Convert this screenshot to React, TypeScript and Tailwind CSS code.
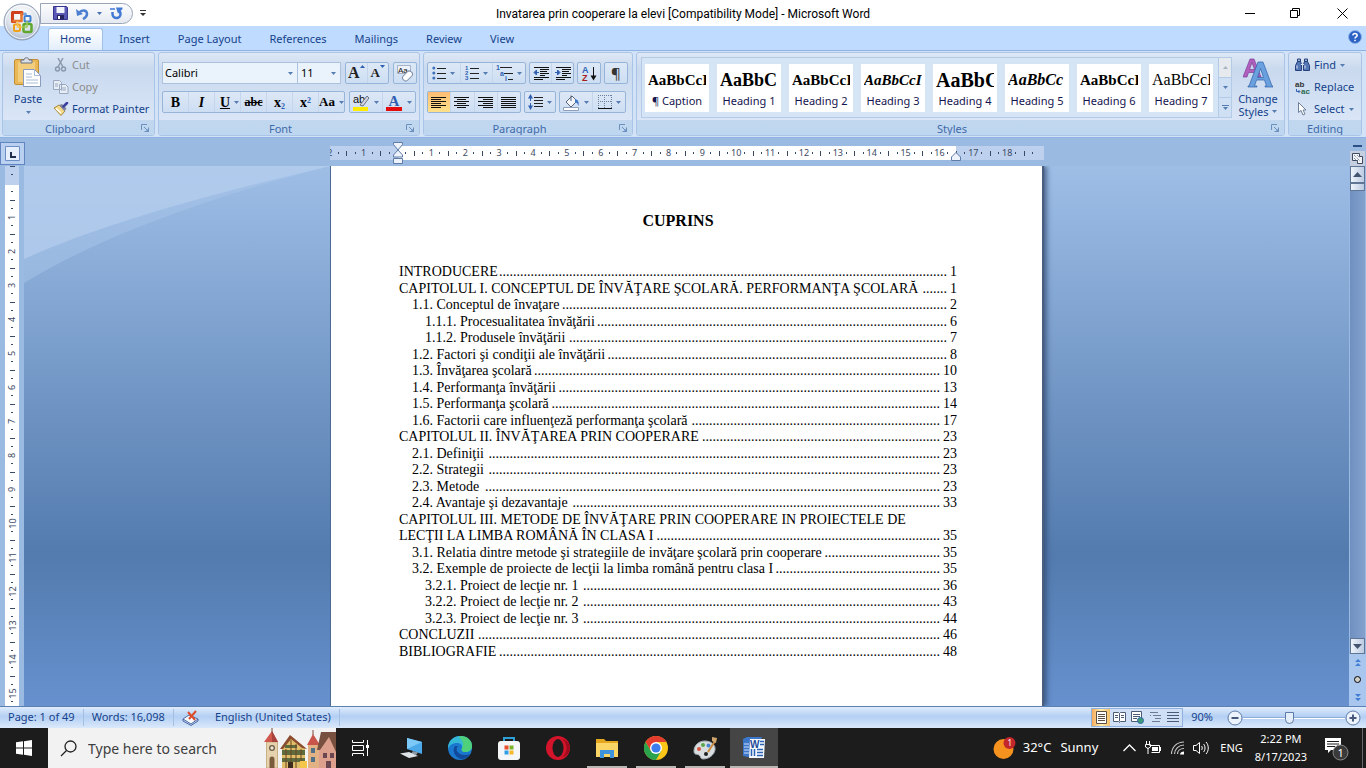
import type { ReactNode } from "react";
import clsx from "clsx";

/* ---------- small shared pieces ---------- */

function Caret({ className = "text-[#567db1]" }: { className?: string }) {
  return (
    <svg width="5" height="3" viewBox="0 0 5 3" className={clsx("shrink-0", className)} aria-hidden="true">
      <path d="M0 0h5L2.500 3z" fill="currentColor" />
    </svg>
  );
}

function Launcher() {
  return (
    <svg width="9" height="9" viewBox="0 0 9 9" aria-hidden="true">
      <path d="M.5 6V.5H6M3 3l3.500 3.500M7.500 3.500v4h-4" fill="none" stroke="#6b8fbf" />
      <path d="M8 4v4H4z" fill="#6b8fbf" />
    </svg>
  );
}

function Group({
  label,
  launcher = true,
  className,
  children,
}: {
  label: string;
  launcher?: boolean;
  className?: string;
  children: ReactNode;
}) {
  return (
    <section
      aria-label={label}
      className={clsx(
        "flex flex-col overflow-hidden rounded-[3px] border border-[#a9c4e6] bg-linear-to-b from-[#dee8f5] from-0% via-[#c9d9ee] via-20% to-[#dfeafa] to-100%",
        className,
      )}
    >
      <div className="flex min-h-0 flex-1">{children}</div>
      <div className="flex h-[15px] items-center bg-linear-to-b from-[#c0d7ef] to-[#bfd6f0] px-1 pt-[2px] text-[#3e6aaa]">
        <span className={clsx("flex-1 text-center leading-[13px]", launcher && "pr-2")}>{label}</span>
        {launcher && (
          <button aria-label={`${label} options`}>
            <Launcher />
          </button>
        )}
      </div>
    </section>
  );
}

function Box({ className, children }: { className?: string; children: ReactNode }) {
  return (
    <div
      className={clsx(
        "flex h-[22px] items-stretch divide-x divide-[#c3d6ec] rounded-[2px] border border-[#97b4d9] bg-linear-to-b from-[#dde8f6] to-[#cddef3]",
        className,
      )}
    >
      {children}
    </div>
  );
}

function Tool({
  label,
  caret,
  active,
  children,
}: {
  label: string;
  caret?: boolean;
  active?: boolean;
  children: ReactNode;
}) {
  return (
    <button
      aria-label={label}
      className={clsx(
        "flex flex-1 items-center justify-center gap-1 text-black",
        active && "bg-linear-to-b from-[#fbbd72] to-[#ffe08a]",
      )}
    >
      {children}
      {caret && <Caret />}
    </button>
  );
}

function Lines({ rows, width = 16 }: { rows: [number, number][]; width?: number }) {
  return (
    <svg width={width} height="13" viewBox={`0 0 ${width} 13`} shapeRendering="crispEdges" aria-hidden="true">
      {rows.map(([x, w], i) => (
        <rect key={i} x={x} y={1 + i * 2} width={w} height="1" fill="#111" />
      ))}
    </svg>
  );
}

/* ---------- title bar ---------- */

function OfficeOrb() {
  return (
    <svg width="38" height="38" viewBox="0 0 38 38" aria-hidden="true">
      <defs>
        <radialGradient id="orb" cx="50%" cy="30%" r="75%">
          <stop offset="0" stopColor="#fff" />
          <stop offset=".55" stopColor="#dfe4ec" />
          <stop offset="1" stopColor="#9fb0c9" />
        </radialGradient>
      </defs>
      <circle cx="19" cy="19" r="18" fill="url(#orb)" stroke="#8c9bb3" />
      <circle cx="19" cy="19" r="16.500" fill="none" stroke="#fff" strokeOpacity=".8" />
      <g fill="none">
        <path d="M19 12.500V9.500H9.500v9H13" stroke="#cf3f1c" strokeWidth="3" strokeLinejoin="round" />
        <path d="M18.500 9.500v8.500H9.500" stroke="#e8762c" strokeWidth="2.500" />
        <rect x="21.500" y="13" width="6" height="5.500" rx="1" stroke="#3f7fd0" strokeWidth="2" />
        <path d="M20 11h4M22 9.500v3" stroke="#6ea3e2" strokeWidth="1.500" />
        <rect x="11" y="21.500" width="6" height="6.500" rx="1" stroke="#f0a11c" strokeWidth="2" />
        <path d="M14.500 18v6h5" stroke="#f7c04c" strokeWidth="1.500" />
        <rect x="20.500" y="21" width="8" height="8" rx="1.500" stroke="#5fa62c" strokeWidth="2.500" />
        <path d="M24 18v6h-5" stroke="#9ccb5a" strokeWidth="1.500" />
      </g>
    </svg>
  );
}

function TitleBar() {
  return (
    <header className="flex h-[26px] shrink-0 items-center bg-white">
      <div className="flex flex-1 items-center">
        <div className="ml-[40px] flex h-[21px] w-[93px] items-center rounded-r-full border border-[#9aa5b8] bg-linear-to-b from-[#fbfcfe] to-[#e6eaf1] pl-3">
          <button aria-label="Save" className="mr-2">
            <svg width="15" height="14" viewBox="0 0 15 14" aria-hidden="true">
              <path d="M.5.5h13l1 1v12H.5z" fill="#5a58b5" stroke="#37358d" />
              <path d="M3.500 1h8v6h-8z" fill="#f2f4fb" />
              <path d="M4 9h7v4.500H4z" fill="#26245f" />
              <path d="M5 10h2v3H5z" fill="#fff" />
            </svg>
          </button>
          <button aria-label="Undo" className="mr-2">
            <svg width="13" height="13" viewBox="0 0 13 13" aria-hidden="true">
              <path d="M3 6c3-4 8-3 8 1 0 2-2 4-4 5" fill="none" stroke="#4d7fd0" strokeWidth="2.500" />
              <path d="M0 2l1 7 6-2z" fill="#4d7fd0" />
            </svg>
          </button>
          <button aria-label="Undo history" className="mr-2">
            <Caret className="text-[#4c6fb0]" />
          </button>
          <button aria-label="Redo">
            <svg width="13" height="13" viewBox="0 0 13 13" aria-hidden="true">
              <path d="M2.500 5v2a4 4 0 0 0 8 0c0-2-1-3-2.500-3.500" fill="none" stroke="#4178d4" strokeWidth="2.500" />
              <path d="M6 .5h6.500v1.500L8 6.500z" fill="#4178d4" />
              <path d="M0 2h5" stroke="#4178d4" strokeWidth="1.500" />
            </svg>
          </button>
        </div>
        <button aria-label="Customize Quick Access Toolbar" className="ml-[7px]">
          <svg width="6" height="7" viewBox="0 0 6 7" aria-hidden="true">
            <path d="M0 .5h6" stroke="#333" />
            <path d="M0 3h6L3 6z" fill="#333" />
          </svg>
        </button>
      </div>
      <h1 className="pt-[2px] font-['Roboto','Noto_Sans',sans-serif] text-[12px] text-black">
        Invatarea prin cooperare la elevi [Compatibility Mode] - Microsoft Word
      </h1>
      <div className="flex flex-1 justify-end">
        <button aria-label="Minimize" className="flex w-[46px] justify-center">
          <svg width="11" height="11" viewBox="0 0 11 11" aria-hidden="true">
            <path d="M0 5.500h10" stroke="#000" />
          </svg>
        </button>
        <button aria-label="Restore" className="flex w-[45px] justify-center">
          <svg width="11" height="11" viewBox="0 0 11 11" aria-hidden="true">
            <path d="M.5 2.500h7v7h-7zM2.500 2.500v-2h7v7h-2" fill="none" stroke="#000" />
          </svg>
        </button>
        <button aria-label="Close" className="flex w-[48px] justify-center">
          <svg width="11" height="11" viewBox="0 0 11 11" aria-hidden="true">
            <path d="M.5.5l10 10M10.500.5l-10 10" stroke="#000" />
          </svg>
        </button>
      </div>
    </header>
  );
}

function TabBar() {
  const tabs = ["Home", "Insert", "Page Layout", "References", "Mailings", "Review", "View"];
  return (
    <nav className="flex h-6 shrink-0 items-end bg-[#bfdbff] pl-[48px] text-[#15428b]">
      {tabs.map((t, i) => (
        <button
          key={t}
          className={clsx(
            "h-[22px] rounded-t-[3px]",
            i === 0
              ? "mr-[2px] border border-b-0 border-[#a2bfe4] bg-linear-to-b from-white to-[#e3eefb] px-[11px]"
              : "px-[14px]",
          )}
        >
          {t}
        </button>
      ))}
      <button aria-label="Help" className="mr-1 mb-1.5 ml-auto">
        <svg width="14" height="14" viewBox="0 0 14 14" aria-hidden="true">
          <circle cx="7" cy="7" r="6.500" fill="#2c62c4" stroke="#8fb4ea" />
          <path d="M4.800 5.400C5 2.900 9.300 3 9.200 5.400 9.100 6.900 7 6.700 7 8.500M7 9.800v1.500" fill="none" stroke="#fff" strokeWidth="1.500" />
        </svg>
      </button>
    </nav>
  );
}

/* ---------- ribbon ---------- */

function ClipboardGroup() {
  return (
    <Group label="Clipboard" className="w-[153px]">
      <button className="flex w-[50px] flex-col items-center pt-1 text-[#15428b]">
        <svg width="28" height="30" viewBox="0 0 28 30" aria-hidden="true">
          <rect x=".5" y="2.500" width="24" height="25" rx="1.500" fill="#eab857" stroke="#c28f35" />
          <path d="M4 5h17v20H4z" fill="#f3cd7e" />
          <path d="M7 6V3h3c0-3 5-3 5 0h3v3z" fill="#d9dde5" stroke="#6b7280" />
          <path d="M9.500 12.500h11l6 6v11h-17z" fill="#fff" stroke="#8a9cbc" />
          <path d="M20.500 12.500v6h6M12 17h6M12 20h6M12 23h12M12 26h12" fill="none" stroke="#a9bbd8" />
        </svg>
        <span className="mt-1 leading-4">Paste</span>
        <Caret className="mt-1 text-[#567db1]" />
      </button>
      <div className="flex flex-1 flex-col pt-[1px]">
        <button className="flex h-[22px] items-center text-[#8d8d8d]">
          <svg width="16" height="14" viewBox="0 0 16 14" className="mr-[3px]" aria-hidden="true">
            <path d="M5 0l5 9M10 0L5 9" stroke="#8b98ad" strokeWidth="1.500" />
            <circle cx="4.500" cy="11" r="2" fill="none" stroke="#8b98ad" strokeWidth="1.500" />
            <circle cx="10.500" cy="11" r="2" fill="none" stroke="#8b98ad" strokeWidth="1.500" />
          </svg>
          Cut
        </button>
        <button className="flex h-[22px] items-center text-[#8d8d8d]">
          <svg width="16" height="14" viewBox="0 0 16 14" className="mr-[3px]" aria-hidden="true">
            <path d="M.5.5h6l2 2v7h-8zM6.500 4.500h6l2.500 2.500v6.500H6.500z" fill="#e8eef6" stroke="#9aa8bf" />
            <path d="M2 4h3M2 6h3M8 8h5M8 10h5" stroke="#9aa8bf" />
          </svg>
          Copy
        </button>
        <button className="flex h-[22px] items-center text-[#15428b]">
          <svg width="16" height="14" viewBox="0 0 16 14" className="mr-[3px]" aria-hidden="true">
            <path d="M1 6l5-3 6 6-4 4.500z" fill="#f3d988" stroke="#a88a3a" />
            <path d="M3 6.500l5 4.500" stroke="#fff" strokeWidth="1.500" />
            <path d="M6 3l3-1 4.500 4.500-2 3z" fill="#84879c" />
            <path d="M10.500 4.500L14 1" stroke="#3b3f9e" strokeWidth="2.500" strokeLinecap="round" />
          </svg>
          Format Painter
        </button>
      </div>
    </Group>
  );
}

function FontGroup() {
  return (
    <Group label="Font" className="w-[262px]">
      <div className="flex flex-1 flex-col gap-[7px] px-[3px] pt-[9px]">
        <div className="flex gap-1">
          <div className="flex">
            <label className="relative flex items-center">
              <select aria-label="Font" className="h-[22px] w-[136px] appearance-none border border-[#abc1de] bg-[#eaf2fb] pl-[2px] text-black">
                <option>Calibri</option>
              </select>
              <span className="pointer-events-none absolute right-[5px]">
                <Caret />
              </span>
            </label>
            <label className="relative flex items-center">
              <select aria-label="Font size" className="h-[22px] w-[43px] appearance-none border border-l-0 border-[#abc1de] bg-[#eaf2fb] pl-[3px] text-black">
                <option>11</option>
              </select>
              <span className="pointer-events-none absolute right-[5px]">
                <Caret />
              </span>
            </label>
          </div>
          <Box className="w-[44px]">
            <Tool label="Grow font">
              <span className="flex items-start font-['Liberation_Serif',serif] text-[16px] leading-4 font-bold text-[#222]">
                A
                <svg width="5" height="3" viewBox="0 0 5 3" aria-hidden="true">
                  <path d="M0 3h5L2.500 0z" fill="#2f5fb0" />
                </svg>
              </span>
            </Tool>
            <Tool label="Shrink font">
              <span className="flex items-start font-['Liberation_Serif',serif] text-[13px] leading-4 font-bold text-[#222]">
                A
                <Caret className="text-[#2f5fb0]" />
              </span>
            </Tool>
          </Box>
          <Box className="w-[24px]">
            <Tool label="Clear formatting">
              <svg width="17" height="17" viewBox="0 0 17 17" aria-hidden="true">
                <path d="M.5.5h13v8H.5z" fill="#eef3fa" stroke="#a3b3cb" />
                <text x="1" y="8" fontSize="8" fontFamily="Liberation Sans, sans-serif" fill="#111">Aa</text>
                <rect x="5" y="8" width="11" height="6" rx="2.500" transform="rotate(-45 10.500 11)" fill="#fff" stroke="#7b8aa5" />
              </svg>
            </Tool>
          </Box>
        </div>
        <div className="flex gap-1 font-['Liberation_Serif',serif]">
          <Box className="w-[183px]">
            <Tool label="Bold"><b className="text-[14px]">B</b></Tool>
            <Tool label="Italic"><i className="text-[14px] font-bold">I</i></Tool>
            <Tool label="Underline" caret><span className="ml-1 text-[14px] font-bold underline">U</span></Tool>
            <Tool label="Strikethrough"><s className="text-[12px] font-bold">abc</s></Tool>
            <Tool label="Subscript">
              <span className="text-[14px] font-bold">x<sub className="text-[8px] text-[#2f5fb0]">2</sub></span>
            </Tool>
            <Tool label="Superscript">
              <span className="text-[14px] font-bold">x<sup className="text-[8px] text-[#2f5fb0]">2</sup></span>
            </Tool>
            <Tool label="Change case" caret><span className="text-[13px] font-bold">Aa</span></Tool>
          </Box>
          <Box className="w-[67px]">
            <Tool label="Text highlight color" caret>
              <svg width="17" height="17" viewBox="0 0 17 17" aria-hidden="true">
                <text x="0" y="9" fontSize="11" fontFamily="Liberation Sans, sans-serif" fill="#111">ab</text>
                <path d="M7 11l7-9 2 2-6 8z" fill="#cfd6e2" stroke="#6b7484" />
                <path d="M0 13h15v4H0z" fill="#ffeb00" />
              </svg>
            </Tool>
            <Tool label="Font color" caret>
              <svg width="17" height="17" viewBox="0 0 17 17" aria-hidden="true">
                <text x="2.500" y="12" fontSize="15" fontWeight="700" fontFamily="Liberation Serif, serif" fill="#2f5fb0">A</text>
                <path d="M0 13h16v4H0z" fill="#e30b0b" />
              </svg>
            </Tool>
          </Box>
        </div>
      </div>
    </Group>
  );
}

function ListIcon({ glyphs }: { glyphs?: string[] }) {
  return (
    <svg width="14" height="15" viewBox="0 0 14 15" aria-hidden="true">
      {[2, 7, 12].map((y, i) => (
        <g key={y}>
          {glyphs ? (
            <text x="0" y={y + 2} fontSize="6" fontWeight="700" fontFamily="Liberation Sans, sans-serif" fill="#2f5fb0">{glyphs[i]}</text>
          ) : (
            <circle cx="1.800" cy={y} r="1.500" fill="#3f70bb" />
          )}
          <path d={`M5 ${y + 0.5}h9`} stroke="#222" />
        </g>
      ))}
    </svg>
  );
}

function IndentIcon({ right }: { right?: boolean }) {
  return (
    <svg width="16" height="13" viewBox="0 0 16 13" aria-hidden="true">
      <path d="M1 .5h15M7 2.500h9M7 4.500h7M7 6.500h9M7 8.500h5M1 10.500h15M1 12.500h9" stroke="#111" />
      <path d={right ? "M5 5.500L2.500 3v5zM0 5.500h3" : "M1 5.500l2.500-2.500v5zM3 5.500h3"} fill="#2f5fb0" stroke="#2f5fb0" />
    </svg>
  );
}

const full: [number, number][] = [[0, 15], [0, 15], [0, 15], [0, 15], [0, 15], [0, 15]];
const alignLeft: [number, number][] = [[0, 15], [0, 10], [0, 15], [0, 10], [0, 15], [0, 10]];
const alignCenter: [number, number][] = [[0, 15], [3, 9], [0, 15], [3, 9], [0, 15], [3, 9]];
const alignRight: [number, number][] = [[0, 15], [5, 10], [0, 15], [5, 10], [0, 15], [5, 10]];

function ParagraphGroup() {
  return (
    <Group label="Paragraph" className="w-[210px]">
      <div className="flex flex-1 flex-col gap-[7px] px-[3px] pt-[9px]">
        <div className="flex gap-[3px]">
          <Box className="w-[99px]">
            <Tool label="Bullets" caret><ListIcon /></Tool>
            <Tool label="Numbering" caret><ListIcon glyphs={["1", "2", "3"]} /></Tool>
            <Tool label="Multilevel list" caret>
              <svg width="17" height="16" viewBox="0 0 17 16" aria-hidden="true">
                <path d="M4 2.500h12M8 8.500h9M12 14.500h5" stroke="#222" />
                <g fontSize="7" fontWeight="700" fontFamily="Liberation Sans, sans-serif" fill="#2f5fb0">
                  <text x="0" y="5">1</text>
                  <text x="4" y="11">a</text>
                  <text x="9" y="16">i</text>
                </g>
              </svg>
            </Tool>
          </Box>
          <Box className="w-[45px]">
            <Tool label="Decrease indent"><IndentIcon /></Tool>
            <Tool label="Increase indent"><IndentIcon right /></Tool>
          </Box>
          <Box className="w-[24px]">
            <Tool label="Sort">
              <svg width="16" height="17" viewBox="0 0 16 17" aria-hidden="true">
                <g fontSize="9" fontWeight="700" fontFamily="Liberation Sans, sans-serif">
                  <text x="1" y="8" fill="#2f5fb0">A</text>
                  <text x="1" y="16" fill="#a62020">Z</text>
                </g>
                <path d="M12.500 2v12" stroke="#111" />
                <path d="M9.500 10.500h6l-3 5z" fill="#111" />
              </svg>
            </Tool>
          </Box>
          <Box className="w-[24px]">
            <Tool label="Show formatting marks"><span className="text-[15px] text-[#333]">¶</span></Tool>
          </Box>
        </div>
        <div className="flex gap-[3px]">
          <Box className="w-[94px]">
            <Tool label="Align left" active><Lines rows={alignLeft} /></Tool>
            <Tool label="Center"><Lines rows={alignCenter} /></Tool>
            <Tool label="Align right"><Lines rows={alignRight} /></Tool>
            <Tool label="Justify"><Lines rows={full} /></Tool>
          </Box>
          <Box className="w-[32px]">
            <Tool label="Line spacing" caret>
              <svg width="15" height="16" viewBox="0 0 15 16" aria-hidden="true">
                <path d="M6 3.500h9M6 6.500h9M6 9.500h9M6 12.500h9" stroke="#222" />
                <path d="M2.500 3v10" stroke="#2f5fb0" strokeDasharray="4 2" />
                <path d="M0 4.500h5L2.500 0zM0 11.500h5L2.500 16z" fill="#2f5fb0" />
              </svg>
            </Tool>
          </Box>
          <Box className="w-[67px]">
            <Tool label="Shading" caret>
              <svg width="17" height="17" viewBox="0 0 17 17" aria-hidden="true">
                <path d="M3 8l6-6 5 5-6 6z" fill="#f4f6fa" stroke="#55637c" />
                <path d="M8 7V1.500" stroke="#55637c" />
                <path d="M12 5c4 1 4 4 3.500 7-1-3-2-4-3.500-3z" fill="#3d78c9" />
                <path d="M.5 13.500h15v3H.5z" fill="#fff" stroke="#8fa0bb" />
              </svg>
            </Tool>
            <Tool label="Borders" caret>
              <svg width="14" height="14" viewBox="0 0 14 14" shapeRendering="crispEdges" aria-hidden="true">
                <path d="M0 .5h14M0 6.500h14M.5 0v13M6.500 0v13M13.500 0v13" stroke="#6b7f9e" strokeDasharray="1 1" />
                <path d="M0 13.500h14" stroke="#111" />
              </svg>
            </Tool>
          </Box>
        </div>
      </div>
    </Group>
  );
}

const styleCards = [
  { name: "¶ Caption", sample: "AaBbCcI", look: "text-[15px] font-bold" },
  { name: "Heading 1", sample: "AaBbC", look: "text-[18px] font-bold" },
  { name: "Heading 2", sample: "AaBbCcI", look: "text-[15px] font-bold" },
  { name: "Heading 3", sample: "AaBbCcI", look: "text-[15px] font-bold italic" },
  { name: "Heading 4", sample: "AaBbC", look: "text-[20px] font-bold" },
  { name: "Heading 5", sample: "AaBbCc", look: "text-[16px] font-bold italic" },
  { name: "Heading 6", sample: "AaBbCcI", look: "text-[15px] font-bold" },
  { name: "Heading 7", sample: "AaBbCcI", look: "text-[16px]" },
];

function StylesGroup() {
  return (
    <Group label="Styles" className="min-w-0 flex-1">
      <div className="flex flex-1 pt-1 pl-1">
        <div className="flex h-[61px] flex-1 border border-[#b4cbe8] bg-[#d6e5f6]">
          <div className="flex flex-1 items-center gap-2 overflow-hidden pl-[3px]">
            {styleCards.map((s) => (
              <button key={s.name} className="flex h-12 w-16 shrink-0 flex-col items-center bg-white px-[3px]">
                <span
                  className={clsx(
                    "mt-1 h-6 w-full overflow-hidden text-left font-['Liberation_Serif',serif] leading-6 whitespace-nowrap text-black",
                    s.look,
                  )}
                >
                  {s.sample}
                </span>
                <span className="leading-[22px] text-[#15154f]">{s.name}</span>
              </button>
            ))}
          </div>
          <div className="flex w-[13px] flex-col divide-y divide-[#b4cbe8] border-l border-[#b4cbe8] bg-[#cfe0f5]">
            <button aria-label="Previous styles" className="flex flex-1 items-center justify-center bg-[#e6e9ee]">
              <svg width="5" height="3" viewBox="0 0 5 3" aria-hidden="true"><path d="M0 3h5L2.500 0z" fill="#a9b2bf" /></svg>
            </button>
            <button aria-label="Next styles" className="flex flex-1 items-center justify-center"><Caret /></button>
            <button aria-label="More styles" className="flex flex-1 flex-col items-center justify-center gap-[1px]">
              <span className="h-px w-[7px] bg-[#567db1]" />
              <Caret />
            </button>
          </div>
        </div>
        <button className="flex w-[52px] flex-col items-center text-[#15428b]">
          <svg width="30" height="30" viewBox="0 0 30 30" className="mt-[1px]" aria-hidden="true">
            <path d="M0 19L7 1h4l7 18h-4l-1.500-4.500h-7L4 19zM6.500 11.500h5L9 4.500z" fill="#b05fbd" stroke="#7d3f96" strokeWidth=".7" />
            <path d="M6 28L15 4h5l9 24h1v1h-8v-1h1.500l-2-6h-8l-2 6H14v1H5v-1zM14.500 19.500h6l-3-9z" fill="#6ba0de" stroke="#2e62ab" strokeWidth=".7" />
          </svg>
          <span className="mt-1 leading-[13px]">Change</span>
          <span className="flex items-center gap-1 leading-[13px]">Styles <Caret /></span>
        </button>
      </div>
    </Group>
  );
}

function EditingGroup() {
  return (
    <Group label="Editing" launcher={false} className="w-[74px]">
      <div className="flex flex-1 flex-col pt-[1px] pl-[6px] text-[#15428b]">
        <button className="flex h-[22px] items-center gap-1">
          <svg width="15" height="14" viewBox="0 0 15 14" aria-hidden="true">
            <path d="M2.500 4V1h3v3M9.500 4V1h3v3" fill="#9db4d9" stroke="#27407c" />
            <path d="M.5 12.500v-5l2-4h3l1 3v6zM8.500 12.500v-6l1-3h3l2 4v5z" fill="#5577b5" stroke="#27407c" />
            <path d="M6 6.500h3M2 7.500v3M10 7.500v3" stroke="#dbe6f7" />
          </svg>
          Find
          <Caret />
        </button>
        <button className="flex h-[22px] items-center gap-1">
          <svg width="15" height="15" viewBox="0 0 15 15" aria-hidden="true">
            <g fontFamily="Liberation Sans, sans-serif" fontWeight="700" fontSize="8">
              <text x="0" y="7" fill="#333">ab</text>
              <text x="6" y="14" fill="#2a6b4f">ac</text>
            </g>
            <path d="M1.500 9v2.500h3M3.500 10l1.500 1.500L3.500 13" fill="none" stroke="#2f5fb0" />
          </svg>
          Replace
        </button>
        <button className="flex h-[22px] items-center gap-1">
          <svg width="15" height="14" viewBox="0 0 15 14" aria-hidden="true">
            <path d="M3.500.5v10L6 8.500l2 4.500 2-1-2-4h3z" fill="#fff" stroke="#6e7f99" />
          </svg>
          Select
          <Caret />
        </button>
      </div>
    </Group>
  );
}

/* ---------- rulers ---------- */

const marks = (label: ReactNode) => [label, "dot", "bar", "dot"];

function HorizontalRuler() {
  const items = Array.from({ length: 21 }, (_, i) => i - 2).flatMap((n) => marks(n === 0 ? "" : Math.abs(n)));
  return (
    <div className="relative mx-auto mt-2 h-[14px] w-[714px]">
      <div className="flex h-full overflow-hidden bg-[linear-gradient(to_right,#bdd0ee_68px,#ffffff_68px,#ffffff_626px,#bdd0ee_626px)] text-[9px] text-[#3b4a63]">
        <div className="-ml-1 flex w-[711px] shrink-0 items-center">
          {items.map((m, i) => (
            <span key={i} className="flex w-0 flex-1 items-center justify-center">
              {m === "dot" ? (
                <span className="h-[2px] w-px bg-[#3b4a63]" />
              ) : m === "bar" ? (
                <span className="h-[5px] w-px bg-[#3b4a63]" />
              ) : (
                m
              )}
            </span>
          ))}
        </div>
      </div>
      <svg width="10" height="22" viewBox="0 0 10 22" className="absolute -top-1 left-[63px]" aria-hidden="true">
        <path d="M.5.5h9v2L5 8 .5 2.500zM5 8l4.500 5v2h-9v-2zM.5 16.500h9v5h-9z" fill="#eef3fb" stroke="#5f7ba8" />
      </svg>
      <svg width="10" height="9" viewBox="0 0 10 9" className="absolute top-[6px] left-[621px]" aria-hidden="true">
        <path d="M5 .5L9.500 5v3.500h-9V5z" fill="#eef3fb" stroke="#5f7ba8" />
      </svg>
    </div>
  );
}

function VerticalRuler() {
  return (
    <div className="ml-[5px] min-h-0 w-[14px] flex-1 overflow-hidden bg-[linear-gradient(to_bottom,#bdd0ee_19px,#ffffff_19px)] text-[9px] text-[#3b4a63]">
      <div className="-mt-1 flex flex-col">
        {Array.from({ length: 16 }, (_, n) => (
          <div key={n} className="flex h-[34px] flex-col">
            <span className="flex flex-1 items-center justify-center"><span className="h-px w-[5px] bg-[#3b4a63]" /></span>
            <span className="flex flex-1 items-center justify-center"><span className="h-px w-[2px] bg-[#3b4a63]" /></span>
            <span className="flex h-0 flex-1 items-center justify-center">
              <span className="-rotate-90 leading-none">{n > 0 ? n : ""}</span>
            </span>
            <span className="flex flex-1 items-center justify-center"><span className="h-px w-[2px] bg-[#3b4a63]" /></span>
          </div>
        ))}
      </div>
    </div>
  );
}

/* ---------- document ---------- */

/* dots: length of the tab leader between the title and its page number */
type Entry = { text: string; page?: number; dots?: number; level: 0 | 1 | 2 };

const contents: Entry[] = [
  { text: "INTRODUCERE", page: 1, dots: 128, level: 0 },
  { text: "CAPITOLUL I. CONCEPTUL DE ÎNVĂŢARE ŞCOLARĂ. PERFORMANŢA ŞCOLARĂ", page: 1, dots: 7, level: 0 },
  { text: "1.1. Conceptul de învaţare", page: 2, dots: 110, level: 1 },
  { text: "1.1.1. Procesualitatea învăţării", page: 6, dots: 100, level: 2 },
  { text: "1.1.2. Produsele învăţării", page: 7, dots: 108, level: 2 },
  { text: "1.2. Factori şi condiţii ale învăţării", page: 8, dots: 97, level: 1 },
  { text: "1.3. Învăţarea şcolară", page: 10, dots: 116, level: 1 },
  { text: "1.4. Performanţa învăţării", page: 13, dots: 109, level: 1 },
  { text: "1.5. Performanţa şcolară", page: 14, dots: 111, level: 1 },
  { text: "1.6. Factorii care influenţeză performanţa şcolară", page: 17, dots: 71, level: 1 },
  { text: "CAPITOLUL II. ÎNVĂŢAREA PRIN COOPERARE", page: 23, dots: 68, level: 0 },
  { text: "2.1. Definiţii", page: 23, dots: 129, level: 1 },
  { text: "2.2. Strategii", page: 23, dots: 129, level: 1 },
  { text: "2.3. Metode", page: 23, dots: 130, level: 1 },
  { text: "2.4. Avantaje şi dezavantaje", page: 33, dots: 105, level: 1 },
  { text: "CAPITOLUL III. METODE DE ÎNVĂŢARE PRIN COOPERARE IN PROIECTELE DE", level: 0 },
  { text: "LECŢII LA LIMBA ROMÂNĂ ÎN CLASA I", page: 35, dots: 81, level: 0 },
  { text: "3.1. Relatia dintre metode şi strategiile de invăţare şcolară prin cooperare", page: 35, dots: 33, level: 1 },
  { text: "3.2. Exemple de proiecte de lecţii la limba română pentru clasa I", page: 35, dots: 47, level: 1 },
  { text: "3.2.1. Proiect de lecţie nr. 1", page: 36, dots: 102, level: 2 },
  { text: "3.2.2. Proiect de lecţie nr. 2", page: 43, dots: 102, level: 2 },
  { text: "3.2.3. Proiect de lecţie nr. 3", page: 44, dots: 102, level: 2 },
  { text: "CONCLUZII", page: 46, dots: 132, level: 0 },
  { text: "BIBLIOGRAFIE", page: 48, dots: 126, level: 0 },
];

function DocumentPage() {
  return (
    <article className="relative mx-auto min-h-full w-[711px] bg-white pr-[85px] pl-[68px] font-['Liberation_Serif',serif] text-[14px] text-black shadow-[-1px_0_0_#4d6a94,2px_0_1px_#4a5f80,5px_0_5px_rgba(45,70,110,0.7)]">
      <h2 className="pt-[44px] text-center text-[16px] leading-[22px] font-bold">CUPRINS</h2>
      <ol className="mt-[32px] flex h-[396px] flex-col justify-between">
        {contents.map((e) => (
          <li
            key={e.text}
            className={clsx("flex leading-4 whitespace-nowrap", e.level === 1 && "pl-[13px]", e.level === 2 && "pl-[26px]")}
          >
            <span>{e.text}</span>
            {e.page !== undefined && (
              <>
                <span aria-hidden="true" className="ml-auto">
                  {".".repeat(e.dots ?? 0)}
                </span>
                <span className="pl-[3px]">{e.page}</span>
              </>
            )}
          </li>
        ))}
      </ol>
    </article>
  );
}

function WorkArea() {
  return (
    <main className="flex min-h-0 flex-1 bg-[#9bbae1]">
      <div className="flex w-6 flex-col">
        <button aria-label="Tab selector" className="mt-1 mb-px flex h-[23px] w-[25px] shrink-0 items-center justify-center border border-[#6185c0] bg-[#b9d0f0]">
          <svg width="15" height="15" viewBox="0 0 15 15" aria-hidden="true">
            <path d="M.5.5h14v14H.5z" fill="#e6effb" stroke="#6c8fc6" />
            <path d="M6 6v5h5" fill="none" stroke="#1f2f4d" strokeWidth="2" />
          </svg>
        </button>
        <VerticalRuler />
      </div>
      <div className="flex min-w-0 flex-1 flex-col">
        <div className="h-[28px] shrink-0">
          <HorizontalRuler />
        </div>
        <div className="relative min-h-0 flex-1 overflow-hidden bg-linear-to-b from-[#9ebee6] via-[#537bae] via-72% to-[#6691ce]">
          <svg width="307" height="118" viewBox="0 0 307 118" className="absolute top-0 left-0" aria-hidden="true">
            <path d="M0 0h307C190 30 80 68 0 117z" fill="#a9c5ea" fillOpacity=".5" />
            <path d="M0 0h307C190 27 80 57 0 93z" fill="#b7cfee" fillOpacity=".65" />
          </svg>
          <DocumentPage />
        </div>
      </div>
      <div className="flex w-[17px] flex-col items-center bg-[#9bbae1]">
        <span className="mt-[7px] h-[2px] w-[9px] bg-[#2d4f87]" />
        <button aria-label="View ruler" className="mt-1 flex h-[15px] w-[15px] shrink-0 items-center justify-center bg-[#c5cfdf]">
          <svg width="13" height="13" viewBox="0 0 13 13" aria-hidden="true">
            <path d="M1.500 1.500h7v3h3v7h-5v-3h-5z" fill="#f3f5f9" stroke="#3d4a61" />
            <path d="M3 3l6 6M6 3l3 3M3 6l4 4" stroke="#5a6780" strokeDasharray="1 1" />
          </svg>
        </button>
        <button aria-label="Scroll up" className="flex h-[17px] w-[15px] shrink-0 items-center justify-center border border-[#5f7696] bg-linear-to-r from-[#eef3fb] to-[#bccbe2]">
          <svg width="9" height="5" viewBox="0 0 9 5" aria-hidden="true"><path d="M0 5h9L4.500 0z" fill="#44546e" /></svg>
        </button>
        <div className="w-[15px] flex-1 bg-linear-to-r from-[#6f90c0] to-[#84a1cd]">
          <div className="h-2 border border-[#5f7696] bg-linear-to-r from-[#eef3fb] to-[#bccbe2]" />
        </div>
        <button aria-label="Scroll down" className="flex h-[16px] w-[15px] shrink-0 items-center justify-center border border-[#5f7696] bg-linear-to-r from-[#eef3fb] to-[#bccbe2]">
          <svg width="9" height="5" viewBox="0 0 9 5" aria-hidden="true"><path d="M0 0h9L4.500 5z" fill="#44546e" /></svg>
        </button>
        <div className="flex h-[52px] w-full shrink-0 flex-col items-center justify-around bg-[#a9c6ef]">
          <button aria-label="Previous page">
            <svg width="6" height="7" viewBox="0 0 6 7" aria-hidden="true"><path d="M0 3h6L3 0zM0 7h6L3 4z" fill="#3f7ed2" /></svg>
          </button>
          <button aria-label="Select browse object" className="size-[7px] rounded-full border border-black bg-[#d0cfc8]" />
          <button aria-label="Next page">
            <svg width="6" height="7" viewBox="0 0 6 7" aria-hidden="true"><path d="M0 0h6L3 3zM0 4h6L3 7z" fill="#3f7ed2" /></svg>
          </button>
        </div>
      </div>
    </main>
  );
}

/* ---------- status bar ---------- */

const viewIcons: { label: string; icon: ReactNode }[] = [
  { label: "Print layout", icon: <path d="M1.500.5h10v12h-10zM3 3.500h7M3 5.500h7M3 7.500h7M3 9.500h7" fill="#fff" stroke="#5d5040" /> },
  { label: "Full screen reading", icon: <path d="M.5 1.500h5l1 1 1-1h5v9h-5l-1 1-1-1h-5zM6.500 2.500v8M2 4.500h3M2 6.500h3M8 4.500h3M8 6.500h3" fill="#fff" stroke="#4b5a75" /> },
  {
    label: "Web layout",
    icon: (
      <>
        <path d="M.5.5h10v10H.5zM2 3.500h7M2 5.500h7M2 7.500h4" fill="#fff" stroke="#4b5a75" />
        <circle cx="9.500" cy="9.500" r="3" fill="#3f9a78" stroke="#2b66a8" />
      </>
    ),
  },
  { label: "Outline", icon: <path d="M1 1.500h8M4 4.500h8M6 7.500h6M3 10.500h8M1 4.500h1" fill="none" stroke="#6c7a92" /> },
  { label: "Draft", icon: <path d="M0 1.500h12M0 4.500h12M0 7.500h12M0 10.500h12" fill="none" stroke="#4b5a75" /> },
];

function StatusBar() {
  return (
    <footer className="flex h-[22px] shrink-0 items-center border-t border-[#5b80b4] bg-linear-to-b from-[#dfecfc] from-0% via-[#b3cff3] via-45% to-[#dbe9fb] to-100% text-[#15428b]">
      <span className="border-r border-[#a3bfe2] pr-2 pl-2">Page: 1 of 49</span>
      <span className="border-r border-[#a3bfe2] pr-2 pl-2">Words: 16,098</span>
      <button aria-label="Proofing errors" className="ml-2">
        <svg width="17" height="16" viewBox="0 0 17 16" aria-hidden="true">
          <path d="M1 9l6-4 9 4-7 5z" fill="#f5f8fd" stroke="#4a67a0" />
          <path d="M1 9v2l8 4.500 7-4.500V9" fill="none" stroke="#4a67a0" />
          <path d="M6 2l7 8M14 1L7 9" stroke="#dd4b2d" strokeWidth="2" />
        </svg>
      </button>
      <span className="ml-4 border-r border-[#a3bfe2] pr-2">English (United States)</span>
      <div className="ml-auto flex h-[19px] w-[92px] border border-[#8fb0dd] bg-[#cfe0f6]">
        {viewIcons.map((v, i) => (
          <button
            key={v.label}
            aria-label={v.label}
            className={clsx("flex flex-1 items-center justify-center", i === 0 && "bg-linear-to-r from-[#f5a95b] via-[#fff0b0] to-[#f8c069]")}
          >
            <svg width="13" height="13" viewBox="0 0 13 13" aria-hidden="true">{v.icon}</svg>
          </button>
        ))}
      </div>
      <span className="w-[44px] pr-[6px] text-center">90%</span>
      <button aria-label="Zoom out">
        <svg width="16" height="16" viewBox="0 0 16 16" aria-hidden="true">
          <circle cx="8" cy="8" r="7" fill="#edf3fc" stroke="#5d7aa8" />
          <path d="M4.500 8h7" stroke="#46597c" strokeWidth="2" />
        </svg>
      </button>
      <input
        type="range"
        aria-label="Zoom"
        defaultValue={45}
        className="h-4 w-[102px] appearance-none bg-[linear-gradient(to_bottom,transparent_7px,#8eacd8_7px,#8eacd8_8px,#ffffff_8px,#ffffff_9px,transparent_9px)] [&::-webkit-slider-thumb]:h-3 [&::-webkit-slider-thumb]:w-[9px] [&::-webkit-slider-thumb]:appearance-none [&::-webkit-slider-thumb]:rounded-b-full [&::-webkit-slider-thumb]:border [&::-webkit-slider-thumb]:border-[#5d7aa8] [&::-webkit-slider-thumb]:bg-[#e4edfa]"
      />
      <button aria-label="Zoom in" className="mr-[5px]">
        <svg width="16" height="16" viewBox="0 0 16 16" aria-hidden="true">
          <circle cx="8" cy="8" r="7" fill="#edf3fc" stroke="#5d7aa8" />
          <path d="M4.500 8h7M8 4.500v7" stroke="#46597c" strokeWidth="2" />
        </svg>
      </button>
    </footer>
  );
}

/* ---------- taskbar ---------- */

function TownPicture() {
  return (
    <svg width="72" height="40" viewBox="0 0 72 40" aria-hidden="true">
      <path d="M2.500 14h11v26h-11z" fill="#e6d3ae" stroke="#c9b083" />
      <path d="M0 14L8 3l6 11z" fill="#d0574c" />
      <path d="M8 3l6 11H8z" fill="#a8423c" />
      <path d="M8 0v5" stroke="#7a4a3a" />
      <circle cx="8" cy="20" r="3" fill="#6c5a48" />
      <circle cx="8" cy="20" r="1.700" fill="#efe6d0" />
      <path d="M5.500 40V31a2.500 2.500 0 0 1 5 0v9z" fill="#7a5b3c" />
      <path d="M18 20L27 8l14 12v20H18z" fill="#e0bd68" />
      <path d="M16 21L26 7l17 14-5-1-11-9-8 10z" fill="#8a4b2f" />
      <path d="M21 17h12v3H21zM18 22h23v5H18zM18 30h23v4H18z" fill="#5e6b3c" />
      <path d="M22 21v19M27 12v28M32 16v24M37 21v19" stroke="#6d4526" />
      <path d="M24 34h5v6h-5z" fill="#3d2b1e" />
      <path d="M44 17h11v23H44z" fill="#e2b184" />
      <path d="M43 17l6-11 7 11z" fill="#c9544a" />
      <path d="M49 2v5" stroke="#7a4a3a" />
      <path d="M47 20h4v5h-4zM47 29h4v5h-4z" fill="#4f7087" />
      <path d="M55 20L62 6h10v34H55z" fill="#dca08c" />
      <path d="M53 22L57 4h15v20L65 9l-9 13z" fill="#77503f" />
      <path d="M59 25h4v5h-4zM66 25h4v5h-4zM62 33h5v7h-5z" fill="#6a4650" />
      <path d="M36 33h7v7h-7z" fill="#f4c64c" />
    </svg>
  );
}

const apps: { name: string; running?: boolean; active?: boolean; icon: ReactNode }[] = [
  {
    name: "Remote desktop",
    icon: (
      <>
        <path d="M8 2l15 4v12L8 13z" fill="#4ba9ea" />
        <path d="M8 2l15 4-15 7z" fill="#7cc8f6" />
        <path d="M14 15l5 1.500-2 2.500-5-1z" fill="#8c98a5" />
        <path d="M1 17.500l9-1.500 9 4-9 2z" fill="#dfe4e8" />
      </>
    ),
  },
  {
    name: "Edge",
    icon: (
      <>
        <circle cx="12" cy="12" r="12" fill="#1b78cf" />
        <path d="M0 11C1 4 6 0 12 0c8 0 12 5 12 10 0 4-3 6-7 6-3 0-4-2-3-4 1-3-2-5-5-5-4 0-8 2-9 6z" fill="#35b8d5" />
        <path d="M12 0c8 0 12 5 12 10 0 4-3 6-7 6-3 0-4-2-3-4 1-3 3-5-3-11z" fill="#4fd07b" />
        <path d="M7 10c-3 4-1 11 6 13 4 0 7-2 9-5-5 2-11 1-13-3-1-2 0-4 1-5z" fill="#114a9b" />
      </>
    ),
  },
  {
    name: "Microsoft Store",
    icon: (
      <>
        <path d="M7 6V2h10v4" fill="none" stroke="#2f9fd8" strokeWidth="2" />
        <rect x="1" y="5" width="22" height="19" rx="3" fill="#f5f6f7" />
        <path d="M7.500 9.500h4v4h-4z" fill="#e8502f" />
        <path d="M12.500 9.500h4v4h-4z" fill="#7db52a" />
        <path d="M7.500 14.500h4v4h-4z" fill="#2f9fe8" />
        <path d="M12.500 14.500h4v4h-4z" fill="#f5b92a" />
      </>
    ),
  },
  {
    name: "Opera",
    icon: (
      <>
        <circle cx="12" cy="12" r="12" fill="#d3142b" />
        <path d="M16 3c6 4 6 14 0 18 5-1 8-5 8-9s-3-8-8-9z" fill="#a00c1d" />
        <ellipse cx="12" cy="12" rx="5.500" ry="9" fill="#1d1d1d" />
      </>
    ),
  },
  {
    name: "File Explorer",
    running: true,
    icon: (
      <>
        <path d="M1 3h8l2 2h12v5H1z" fill="#e5a71f" />
        <path d="M1 7h22v14H1z" fill="#fbd566" />
        <path d="M5 22v-8h14v8h-4v-4H9v4z" fill="#3f93dc" />
      </>
    ),
  },
  {
    name: "Chrome",
    running: true,
    icon: (
      <>
        <circle cx="12" cy="12" r="12" fill="#fbc617" />
        <path d="M1.600 6A12 12 0 0 1 22.400 6H12L6.800 15z" fill="#e33b2e" />
        <path d="M1.600 6A12 12 0 0 0 12 24l5.200-9H6.800z" fill="#2ba24c" />
        <circle cx="12" cy="12" r="6" fill="#fff" />
        <circle cx="12" cy="12" r="4.600" fill="#3b7ded" />
      </>
    ),
  },
  {
    name: "Paint",
    running: true,
    icon: (
      <>
        <path d="M1 15C1 9 6 5 12 5s11 4 10 9-6 9-12 9c-3 0-2-3-4-4s-5 0-5-4z" fill="#d8dde0" stroke="#a4aeb4" />
        <circle cx="6" cy="13" r="2" fill="#d9533f" />
        <circle cx="10" cy="9" r="2" fill="#5aa84a" />
        <circle cx="15.500" cy="9.500" r="2" fill="#4a87cf" />
        <circle cx="13" cy="18" r="2" fill="#222" />
        <path d="M15 16l7-11" stroke="#c98b3f" strokeWidth="2" />
        <path d="M19 1l5 1-1 5-4-2z" fill="#cfa66d" />
      </>
    ),
  },
  {
    name: "Word",
    running: true,
    active: true,
    icon: (
      <>
        <path d="M1 3l4-2h15l-1 2-8 1v18L1 20z" fill="#3c76c8" />
        <path d="M8 3h15l-1 19H7z" fill="#f5f8fd" />
        <text x="8" y="12" fontSize="10" fontWeight="700" fontFamily="Liberation Sans, sans-serif" fill="#1d4b99">W</text>
        <path d="M18 5.500h4M18 8.500h4M15 13.500h6M15 16.500h6M15 19.500h6M9.500 13v7M12.500 13v7" stroke="#2c62b3" strokeWidth="1.500" />
        <path d="M2 8h5M2 11h5M2 14h5M2 17h5" stroke="#cfe0f8" />
      </>
    ),
  },
];

function Taskbar() {
  return (
    <footer className="flex h-10 shrink-0 items-stretch bg-[#1c1c1c] text-white">
      <button aria-label="Start" className="flex w-12 items-center justify-center">
        <svg width="16" height="16" viewBox="0 0 16 16" aria-hidden="true">
          <path d="M0 2.300L7 1.300v6.200H0zM8 1.200L16 0v7.500H8zM0 8.500h7v6.200l-7-1zM8 8.500h8V16l-8-1.200z" fill="#fff" />
        </svg>
      </button>
      <label className="flex w-[288px] items-center bg-[#f2f2f2]">
        <svg width="17" height="17" viewBox="0 0 17 17" className="mr-[11px] ml-3" aria-hidden="true">
          <circle cx="10.500" cy="6.500" r="5.500" fill="none" stroke="#222" strokeWidth="1.300" />
          <path d="M6.500 10.500L1 16" stroke="#222" strokeWidth="1.300" />
        </svg>
        <input
          aria-label="Search"
          placeholder="Type here to search"
          className="w-0 flex-1 bg-transparent text-[14px] outline-none placeholder:text-[#404040]"
        />
        <TownPicture />
      </label>
      <button aria-label="Task view" className="mr-[3px] flex w-12 items-center justify-center">
        <svg width="17" height="16" viewBox="0 0 17 16" aria-hidden="true">
          <path d="M.5 0v2.500h11V0M.5 16v-2.500h11V16M.5 5.500h11v5H.5zM15.500 0v16" fill="none" stroke="#fff" />
          <path d="M14 5h3v3h-3z" fill="#fff" />
        </svg>
      </button>
      <div className="flex gap-px">
        {apps.map((a) => (
          <button
            key={a.name}
            aria-label={a.name}
            className={clsx("flex w-12 flex-col items-center", a.active && "bg-[#454545]")}
          >
            <svg width="24" height="24" viewBox="0 0 24 24" className="mt-2" aria-hidden="true">{a.icon}</svg>
            {a.running && <span className={clsx("mt-auto h-[2px] bg-[#b9b6b4]", a.active ? "w-full" : "w-10")} />}
          </button>
        ))}
      </div>
      <div className="ml-auto flex items-center">
        <button className="flex items-center text-[13px]">
          <svg width="23" height="23" viewBox="0 0 23 23" className="mr-[7px]" aria-hidden="true">
            <circle cx="10.500" cy="12" r="10" fill="#f6921e" />
            <circle cx="16.500" cy="6" r="6" fill="#c3272b" />
            <text x="14.500" y="9" fontSize="8" fontFamily="Noto Sans, sans-serif" fill="#fff">1</text>
          </svg>
          <span className="mr-[9px]">32°C</span>
          <span>Sunny</span>
        </button>
        <button aria-label="Show hidden icons" className="ml-[25px]">
          <svg width="13" height="8" viewBox="0 0 13 8" aria-hidden="true"><path d="M.5 7l6-6 6 6" fill="none" stroke="#fff" strokeWidth="1.300" /></svg>
        </button>
        <button aria-label="Battery" className="ml-[9px]">
          <svg width="17" height="14" viewBox="0 0 17 14" aria-hidden="true">
            <path d="M4.500 4.500h10v7h-8M15.500 6v4" fill="none" stroke="#fff" />
            <path d="M7 6h6v4H7z" fill="#fff" />
            <path d="M1.500 0v3M4.500 0v3M.5 3.500h5V6L3 7.500.5 6zM3 7v6" fill="none" stroke="#fff" />
          </svg>
        </button>
        <button aria-label="Network" className="ml-[9px]">
          <svg width="14" height="14" viewBox="0 0 14 14" aria-hidden="true">
            <path d="M.5 13C.5 6 6 1 13 1M3.500 13C3.500 8 8 4 13 4M6.500 13C6.500 10 9 7.500 13 7.500" fill="none" stroke="#c9c9c9" strokeWidth="1.200" />
            <path d="M9 13.500c0-2 2-3 4-3v3z" fill="#fff" />
          </svg>
        </button>
        <button aria-label="Volume" className="ml-2">
          <svg width="17" height="14" viewBox="0 0 17 14" aria-hidden="true">
            <path d="M.5 4.500H3L6.500 1.500v11L3 9.500H.5zM8.500 5c1 1 1 3 0 4M10.500 3c2 2 2 6 0 8M13 1c3 3 3 9 0 12" fill="none" stroke="#fff" />
          </svg>
        </button>
        <span className="ml-[10px] text-[11px]">ENG</span>
        <time className="ml-3 flex flex-col text-center text-[11px] leading-[18px]">
          <span>2:22 PM</span>
          <span>8/17/2023</span>
        </time>
        <button aria-label="Notifications" className="ml-[17px]">
          <svg width="25" height="25" viewBox="0 0 25 25" aria-hidden="true">
            <path d="M1 2h16v12H7l-3 3v-3H1z" fill="#fff" />
            <path d="M3 5.500h12M3 8h12M3 10.500h8" stroke="#1c1c1c" />
            <circle cx="16.500" cy="16.500" r="7.500" fill="#3a3a3a" stroke="#8a8a8a" />
            <text x="13.500" y="20.500" fontSize="11" fontFamily="Noto Sans, sans-serif" fill="#fff">1</text>
          </svg>
        </button>
        <span className="mr-[3px] ml-[13px] h-10 w-px bg-[#6a6a6a]" />
      </div>
    </footer>
  );
}

export default function App() {
  return (
    <div className="relative flex h-screen flex-col overflow-hidden font-['Noto_Sans','Open_Sans',sans-serif] text-[11px]">
      <TitleBar />
      <TabBar />
      <div className="flex h-[88px] shrink-0 gap-[3px] border-y border-[#8db2e3] bg-[#d2e3f8] p-[1px] pr-1 pl-[2px]">
        <ClipboardGroup />
        <FontGroup />
        <ParagraphGroup />
        <StylesGroup />
        <EditingGroup />
      </div>
      <WorkArea />
      <StatusBar />
      <Taskbar />
      <button aria-label="Office Button" className="absolute top-[3px] left-[3px]">
        <OfficeOrb />
      </button>
    </div>
  );
}
